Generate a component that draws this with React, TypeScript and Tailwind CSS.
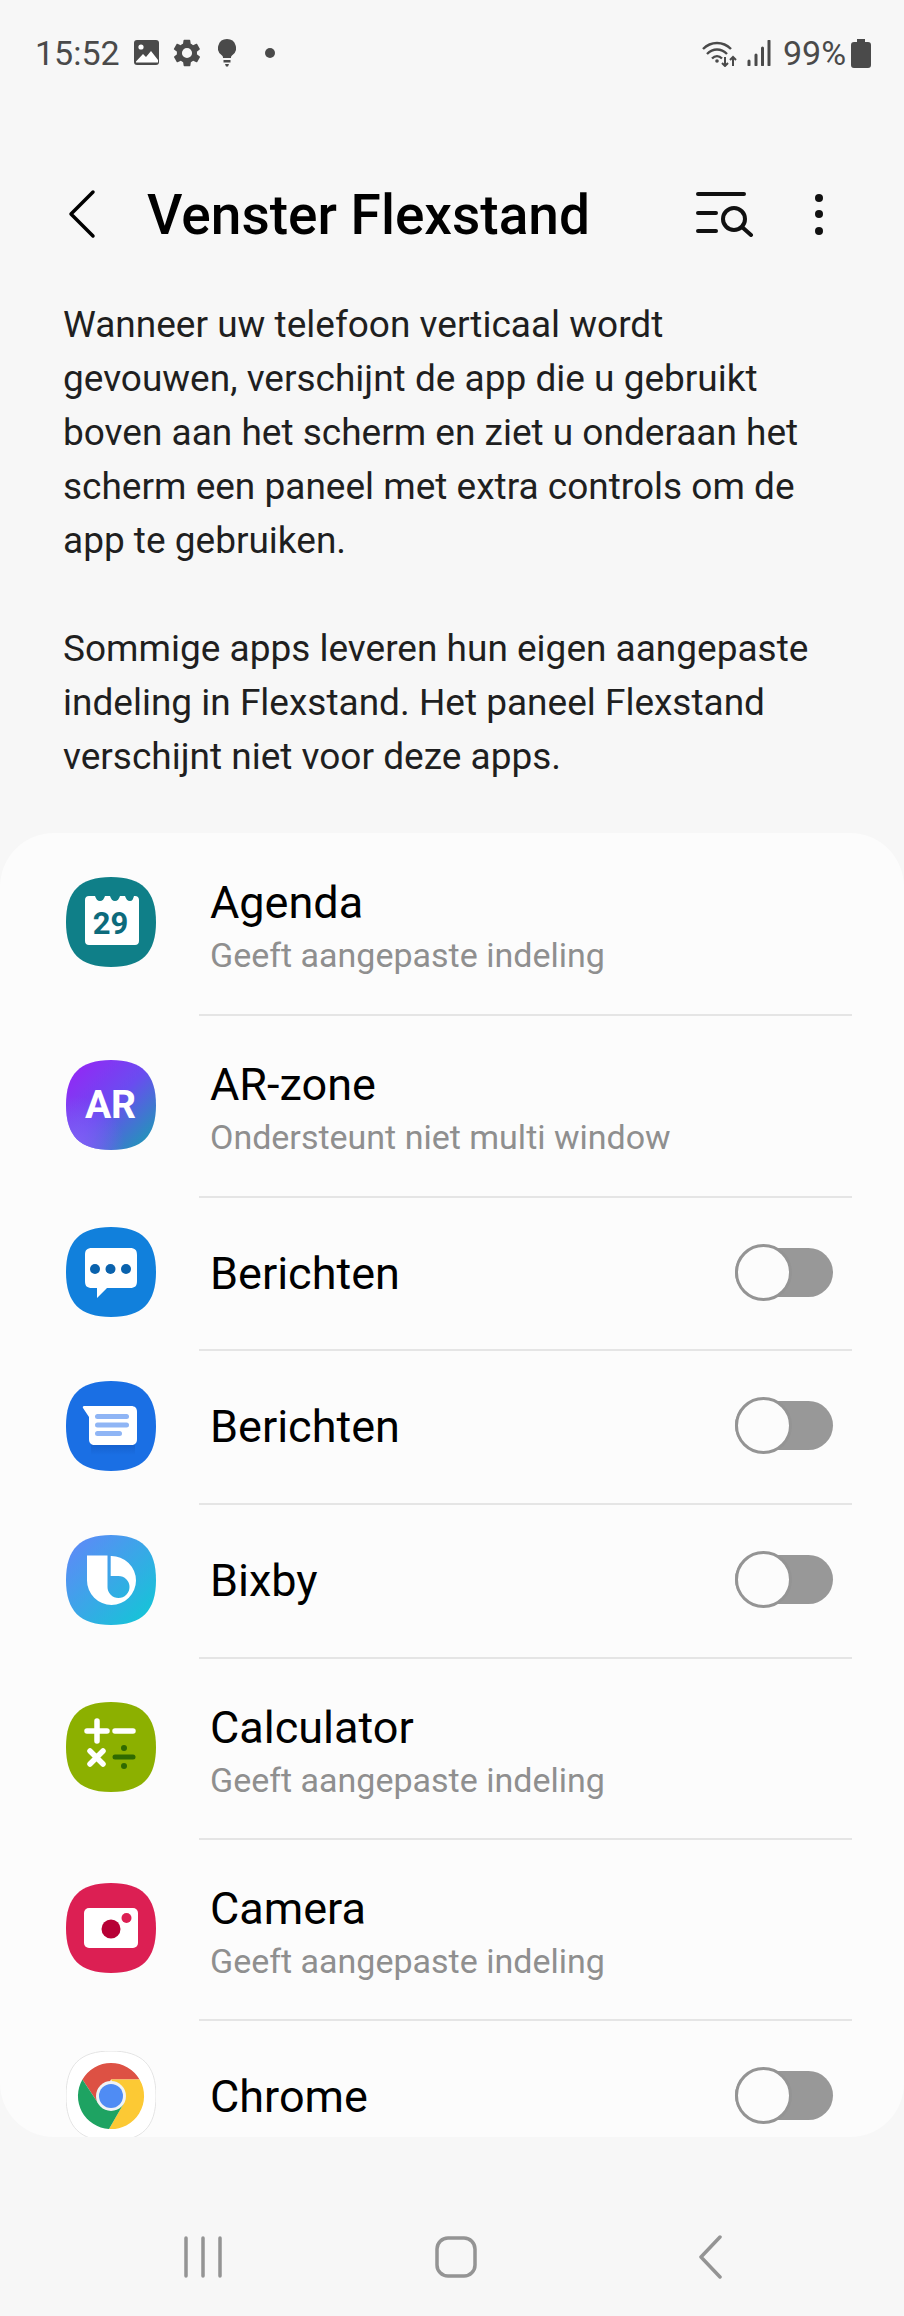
const squircle = "M45 0C76 0 90 14 90 45C90 76 76 90 45 90C14 90 0 76 0 45C0 14 14 0 45 0Z";

function AgendaIcon() {
  return (
    <svg width="90" height="90" viewBox="0 0 90 90">
      <path d={squircle} fill="#0f7f88" />
      <path
        d="M23 19h6c1 3 2.500 5 5 5s4-2 5-5h5c1 3 2.500 5 5 5s4-2 5-5h5c1 3 2.500 5 5 5s3-2 4-5h1c2.500 0 4 1.500 4 4v41c0 2.500-1.500 4-4 4H23c-2.500 0-4-1.500-4-4V23c0-2.500 1.500-4 4-4Z"
        fill="#fff"
      />
      <text x="44.500" y="57" textAnchor="middle" fontFamily="Roboto, sans-serif" fontWeight="700" fontSize="31" fill="#0d6b7c">
        29
      </text>
    </svg>
  );
}

function ArIcon() {
  return (
    <svg width="90" height="90" viewBox="0 0 90 90">
      <defs>
        <linearGradient id="ar1" x1="0" y1="0" x2="1" y2="1">
          <stop offset="0" stopColor="#9a22f6" />
          <stop offset="0.5" stopColor="#6a4cf0" />
          <stop offset="1" stopColor="#12a5ad" />
        </linearGradient>
        <radialGradient id="ar2" cx="0.1" cy="0.95" r="0.55">
          <stop offset="0" stopColor="#8060f5" />
          <stop offset="1" stopColor="#8060f5" stopOpacity="0" />
        </radialGradient>
      </defs>
      <path d={squircle} fill="url(#ar1)" />
      <path d={squircle} fill="url(#ar2)" />
      <text x="44.500" y="58" textAnchor="middle" fontFamily="Roboto, sans-serif" fontWeight="700" fontSize="39" fill="#fff">
        AR
      </text>
    </svg>
  );
}

function SamsungMessagesIcon() {
  return (
    <svg width="90" height="90" viewBox="0 0 90 90">
      <path d={squircle} fill="#1180dc" />
      <path d="M26 21h38c5 0 7 2 7 7v26c0 5-2 7-7 7H41L31 71V61h-5c-5 0-7-2-7-7V28c0-5 2-7 7-7Z" fill="#fff" />
      <circle cx="29" cy="42" r="5" fill="#0a62ad" />
      <circle cx="44.500" cy="42" r="5" fill="#0a62ad" />
      <circle cx="60" cy="42" r="5" fill="#0a62ad" />
    </svg>
  );
}

function GoogleMessagesIcon() {
  return (
    <svg width="90" height="90" viewBox="0 0 90 90">
      <defs>
        <linearGradient id="gm" x1="0" y1="0" x2="0" y2="1">
          <stop offset="0" stopColor="#0f4cad" stopOpacity="0.45" />
          <stop offset="1" stopColor="#0f4cad" stopOpacity="0" />
        </linearGradient>
      </defs>
      <path d={squircle} fill="#1a6fe4" />
      <path d="M25 62h44v12H25Z" fill="url(#gm)" />
      <path d="M18 25h47c4 0 6 2 6 6v27c0 4-2 6-6 6H29c-4 0-6-2-6-6V36L17 27c-.6-1 0-2 1-2Z" fill="#fff" />
      <rect x="29" y="33" width="34" height="5" rx="2.500" fill="#8fb5f5" />
      <rect x="29" y="41.500" width="34" height="5" rx="2.500" fill="#8fb5f5" />
      <rect x="29" y="50" width="27" height="5" rx="2.500" fill="#8fb5f5" />
    </svg>
  );
}

function BixbyIcon() {
  return (
    <svg width="90" height="90" viewBox="0 0 90 90">
      <defs>
        <linearGradient id="bx" x1="0.1" y1="0.1" x2="0.9" y2="0.9">
          <stop offset="0" stopColor="#5b8cf6" />
          <stop offset="1" stopColor="#17c3d8" />
        </linearGradient>
      </defs>
      <path d={squircle} fill="url(#bx)" />
      <path
        d="M21 20.500H41.500V52A11 11 0 1 0 52.500 41H44.700V21A24.500 24.500 0 0 1 70 45.500A24.500 24.500 0 0 1 21 45.500Z"
        fill="#fff"
      />
    </svg>
  );
}

function CalculatorIcon() {
  return (
    <svg width="90" height="90" viewBox="0 0 90 90">
      <path d={squircle} fill="#8cb000" />
      <path d="M21 29h20M31 19v20M49 29h18M24 49l13 13M37 49 24 62" stroke="#fff" strokeWidth="5.500" strokeLinecap="round" fill="none" />
      <path d="M49 55h18" stroke="#2f6a00" strokeWidth="5" strokeLinecap="round" />
      <circle cx="58" cy="46" r="3" fill="#2f6a00" />
      <circle cx="58" cy="64" r="3" fill="#2f6a00" />
    </svg>
  );
}

function CameraIcon() {
  return (
    <svg width="92" height="92" viewBox="0 0 90 90">
      <path d={squircle} fill="#dc1f53" />
      <rect x="18" y="25" width="54" height="40" rx="5" fill="#fff" />
      <circle cx="45" cy="46" r="9.500" fill="#b70035" />
      <circle cx="60.500" cy="35" r="5" fill="#dc1f53" />
    </svg>
  );
}

function ChromeIcon() {
  return (
    <svg width="90" height="90" viewBox="0 0 90 90">
      <path d={squircle} fill="#fff" stroke="#e4e4e4" strokeWidth="1" />
      <path d="M16.400 28.500A33 33 0 0 1 73.600 28.500H45L32 52Z" fill="#dd5144" />
      <path d="M73.600 28.500A33 33 0 0 1 43 78L58 52 45 28.500Z" fill="#fcc934" />
      <path d="M43 78A33 33 0 0 1 16.400 28.500L32 52H58Z" fill="#1ea362" />
      <circle cx="45" cy="45" r="15" fill="#f1f3f4" />
      <circle cx="45" cy="45" r="12" fill="#4f8cf4" />
    </svg>
  );
}

function Toggle() {
  return (
    <div className="flex items-center w-[98px] h-[57px] shrink-0">
      <div className="w-[98px] h-[49px] rounded-full bg-[#989898] flex items-center">
        <div className="w-[57px] h-[57px] rounded-full bg-[#fcfcfc] border-[3px] border-[#949494]" />
      </div>
    </div>
  );
}

type AppRow = { name: string; sub?: string; icon: React.ReactNode; h: string };

const rows: AppRow[] = [
  { name: "Agenda", sub: "Geeft aangepaste indeling", icon: <AgendaIcon />, h: "h-[181px]" },
  { name: "AR-zone", sub: "Ondersteunt niet multi window", icon: <ArIcon />, h: "h-[180px]" },
  { name: "Berichten", icon: <SamsungMessagesIcon />, h: "h-[151px]" },
  { name: "Berichten", icon: <GoogleMessagesIcon />, h: "h-[152px]" },
  { name: "Bixby", icon: <BixbyIcon />, h: "h-[152px]" },
  { name: "Calculator", sub: "Geeft aangepaste indeling", icon: <CalculatorIcon />, h: "h-[179px]" },
  { name: "Camera", sub: "Geeft aangepaste indeling", icon: <CameraIcon />, h: "h-[179px]" },
  { name: "Chrome", icon: <ChromeIcon />, h: "h-[152px]" },
];

export default function App() {
  return (
    <div className="w-[904px] h-[2316px] bg-[#f7f7f7] flex flex-col font-['Roboto',sans-serif] overflow-hidden">
      {/* status bar */}
      <div className="h-[106px] shrink-0 flex items-center pl-[35px] pr-[33px] text-[#4a4a4a] text-[34px]">
        <span className="w-[93px]">15:52</span>
        <div className="flex items-center">
          <svg width="26" height="26" viewBox="0 0 26 26" className="ml-[6px]">
            <rect x="0" y="0" width="25" height="25" rx="3" fill="#4a4a4a" />
            <circle cx="7" cy="7" r="2.600" fill="#fff" />
            <path d="M2 21.500 9 14l3 3 5-6 7 9v2.500H2Z" fill="#fff" />
          </svg>
          <svg width="32" height="32" viewBox="0 0 24 24" className="ml-[11px]">
            <path
              fill="#4a4a4a"
              d="M19.400 13c.1-.3.1-.7.1-1s0-.7-.1-1l2.100-1.600c.2-.2.200-.4.100-.6l-2-3.500c-.1-.2-.4-.3-.6-.2l-2.500 1c-.5-.4-1.100-.7-1.700-1l-.4-2.700c0-.2-.2-.4-.5-.4h-4c-.2 0-.4.200-.5.400l-.4 2.700c-.6.300-1.200.6-1.700 1l-2.500-1c-.2-.1-.5 0-.6.2l-2 3.500c-.1.200-.1.400.1.600L4.500 11c-.1.300-.1.700-.1 1s0 .7.1 1l-2.100 1.600c-.2.200-.2.400-.1.600l2 3.500c.1.200.4.300.6.200l2.500-1c.5.400 1.100.7 1.700 1l.4 2.700c0 .2.300.4.500.4h4c.3 0 .5-.2.500-.4l.4-2.700c.6-.3 1.200-.6 1.700-1l2.500 1c.2.100.5 0 .6-.2l2-3.500c.1-.2.100-.4-.1-.6L19.400 13ZM12 15.800a3.800 3.800 0 1 1 0-7.600 3.800 3.800 0 0 1 0 7.600Z"
            />
          </svg>
          <svg width="18" height="28" viewBox="0 0 18 28" className="ml-[15px]">
            <path d="M9 0a9 9 0 0 1 5 16.500c-.8.600-1 1.500-1 2.500H5c0-1-.2-1.900-1-2.500A9 9 0 0 1 9 0Z" fill="#4a4a4a" />
            <path d="M5.500 21h7v2.500h-7ZM7 25h4l-1 2.500H8Z" fill="#4a4a4a" />
          </svg>
          <div className="w-[10px] h-[10px] rounded-full bg-[#4a4a4a] ml-[29px]" />
        </div>
        <div className="ml-auto flex items-center">
          <svg width="36" height="28" viewBox="0 0 36 28">
            <path d="M1 10C9 2 21 2 29 10M5 15c6-6 14-6 20 0M10 19.500c3-3 7-3 10 0" stroke="#4a4a4a" strokeWidth="2.400" fill="none" />
            <circle cx="15" cy="22" r="1.800" fill="#4a4a4a" />
            <path d="M23 27v-9m-3 6 3 3 3-3M31 27v-9m-3 3 3-3 3 3" stroke="#4a4a4a" strokeWidth="2" fill="none" />
          </svg>
          <svg width="24" height="26" viewBox="0 0 24 26" className="ml-[9px]">
            <path d="M2 21v4M9 15v10M15.500 8v17M22 1v24" stroke="#4a4a4a" strokeWidth="3" strokeLinecap="round" />
          </svg>
          <span className="ml-[12px] w-[68px]">99%</span>
          <svg width="20" height="29" viewBox="0 0 20 29">
            <path d="M6 0h8v3h3c2 0 3 1 3 3v20c0 2-1 3-3 3H3c-2 0-3-1-3-3V6c0-2 1-3 3-3h3Z" fill="#4a4a4a" />
          </svg>
        </div>
      </div>

      {/* header */}
      <div className="mt-[58px] h-[100px] shrink-0 flex items-center pl-[68px] pr-[81px]">
        <svg width="28" height="50" viewBox="0 0 28 50">
          <path d="M25 3 3 25l22 22" stroke="#000" strokeWidth="3.500" fill="none" strokeLinecap="round" strokeLinejoin="round" />
        </svg>
        <h1 className="ml-[51px] pt-[3px] text-[55px] leading-none font-medium text-black">Venster Flexstand</h1>
        <svg width="58" height="46" viewBox="0 0 58 46" className="ml-auto">
          <path d="M2 3h46M2 22h18M2 40h18" stroke="#111" strokeWidth="4" strokeLinecap="round" />
          <circle cx="38" cy="28" r="11" stroke="#111" strokeWidth="4" fill="none" />
          <path d="m46 36 9 8" stroke="#111" strokeWidth="4" strokeLinecap="round" />
        </svg>
        <div className="ml-[61px] flex flex-col gap-[8.500px]">
          <div className="w-2 h-2 rounded-full bg-[#111]" />
          <div className="w-2 h-2 rounded-full bg-[#111]" />
          <div className="w-2 h-2 rounded-full bg-[#111]" />
        </div>
      </div>

      {/* description */}
      <p className="mt-[34px] shrink-0 px-[63px] text-[37px] leading-[54px] text-[#1f1f1f]">
        Wanneer uw telefoon verticaal wordt gevouwen, verschijnt de app die u gebruikt boven aan het scherm en ziet u onderaan het scherm een paneel met extra controls om de app te gebruiken.
        <br />
        <br />
        Sommige apps leveren hun eigen aangepaste indeling in Flexstand. Het paneel Flexstand verschijnt niet voor deze apps.
      </p>

      {/* app list */}
      <div className="mt-[49px] h-[1304px] shrink-0 bg-[#fcfcfc] rounded-[54px] overflow-hidden">
        {rows.map((row, i) => (
          <div key={i}>
            <div className={`${row.h} flex items-center pb-[3px] pl-[66px] pr-[71px]`}>
              <div className="w-[90px] h-[92px] flex items-center justify-center shrink-0">{row.icon}</div>
              <div className={`ml-[54px] flex-1 flex flex-col ${row.sub ? "pt-[10px]" : "pt-[3px]"}`}>
                <span className="text-[45px] leading-[50px] text-black">{row.name}</span>
                {row.sub && <span className="text-[34px] leading-[44px] mt-[5px] text-[#8f8f8f]">{row.sub}</span>}
              </div>
              {!row.sub && <Toggle />}
            </div>
            {i < rows.length - 1 && <div className="ml-[199px] mr-[52px] h-[2px] bg-[#e5e5e5]" />}
          </div>
        ))}
      </div>

      {/* nav bar */}
      <div className="flex-1 flex items-center justify-between pt-[60px] pl-[184px] pr-[182px]">
        <svg width="38" height="42" viewBox="0 0 38 42">
          <path d="M2 2v38M19 2v38M36 2v38" stroke="#949494" strokeWidth="3.500" strokeLinecap="round" />
        </svg>
        <svg width="42" height="42" viewBox="0 0 42 42" className="-translate-x-[4px]">
          <rect x="2" y="2" width="38" height="38" rx="11" stroke="#949494" strokeWidth="3.500" fill="none" />
        </svg>
        <svg width="24" height="44" viewBox="0 0 24 44">
          <path d="M22 2 3 22l19 20" stroke="#949494" strokeWidth="3.500" fill="none" strokeLinecap="round" strokeLinejoin="round" />
        </svg>
      </div>
    </div>
  );
}
